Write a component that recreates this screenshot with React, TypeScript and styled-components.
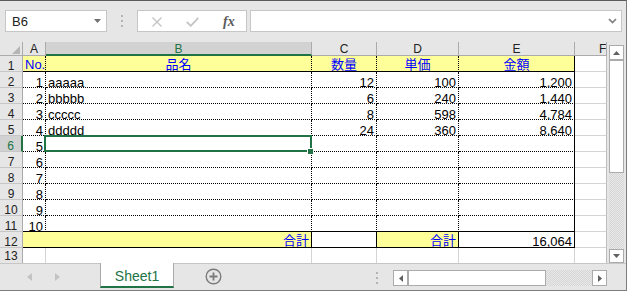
import styled, { createGlobalStyle } from "styled-components";

const GlobalStyle = createGlobalStyle`
  html, body {
    margin: 0;
    padding: 0;
    background: #fff;
  }
  body {
    font-family: "Liberation Sans", "Noto Sans CJK JP", sans-serif;
  }
  * {
    box-sizing: border-box;
  }
`;

const GREEN = "#217346";

const Window = styled.div`
    width: 627px;
    height: 291px;
    background: #e6e6e6;
    border-top: 1px solid #5b5b5b;
    border-right: 1px solid #7d7d7d;
    border-bottom: 1px solid #7d7d7d;
    display: flex;
    flex-direction: column;
    overflow: hidden;
`;

const FormulaBar = styled.div`
    height: 41px;
    display: flex;
    align-items: flex-start;
    padding: 9px 0 0 5px;
`;

const NameBox = styled.div`
    width: 102px;
    height: 22px;
    border: 1px solid #c6c6c6;
    background: #fff;
    display: flex;
    align-items: center;
    justify-content: space-between;
    padding: 0 5px 0 6px;
    font-size: 13px;
    color: #222;
`;

const Grip = styled.div<{ $h: number }>`
    width: 2px;
    height: ${(p) => p.$h}px;
    background-image: repeating-linear-gradient(
        to bottom,
        #b3b3b3 0 2px,
        transparent 2px 5px
    );
`;

const FxBox = styled.div`
    width: 110px;
    height: 22px;
    margin-left: 14px;
    border: 1px solid #c6c6c6;
    background: #fff;
    display: flex;
    align-items: center;
    padding: 1px 0 0 14px;
`;

const FxText = styled.span`
    margin-left: 24px;
    font-family: "Liberation Serif", serif;
    font-style: italic;
    font-weight: bold;
    font-size: 14px;
    color: #5a5a5a;
`;

const FormulaInput = styled.div`
    width: 372px;
    height: 22px;
    margin-left: 3px;
    border: 1px solid #c6c6c6;
    background: #fff;
    display: flex;
    align-items: center;
    justify-content: flex-end;
    padding-right: 4px;
`;

const Main = styled.div`
    display: flex;
    height: 221px;
`;

const Sheet = styled.div`
    width: 607px;
    height: 221px;
    display: grid;
    grid-template-columns: 23px 23px 266px 65px 82px 116px 32px;
    grid-template-rows: 14px repeat(12, 16px) 15px;
    background: #fff;
`;

const Corner = styled.div`
    background: #e6e6e6;
    border-right: 1px solid #ababab;
    border-bottom: 1px solid #ababab;
    display: flex;
    justify-content: flex-end;
    align-items: flex-end;
    padding: 0 2px 1px 0;
`;

const ColHead = styled.div<{ $active?: boolean; $offset?: number }>`
    background: ${(p) => (p.$active ? "#d2d2d2" : "#e6e6e6")};
    color: ${(p) => (p.$active ? GREEN : "#222")};
    border-right: 1px solid #ababab;
    border-bottom: ${(p) =>
        p.$active ? `2px solid ${GREEN}` : "1px solid #ababab"};
    text-align: ${(p) => (p.$offset ? "left" : "center")};
    padding-left: ${(p) => p.$offset ?? 0}px;
    font-size: 12px;
    line-height: 13px;
    padding-top: 1px;
    overflow: hidden;
`;

const RowHead = styled.div<{ $active?: boolean; $last?: boolean }>`
    background: ${(p) => (p.$active ? "#d2d2d2" : "#e6e6e6")};
    color: ${(p) => (p.$active ? GREEN : "#222")};
    border-right: ${(p) =>
        p.$active ? `2px solid ${GREEN}` : "1px solid #ababab"};
    border-bottom: ${(p) => (p.$last ? "none" : "1px solid #c6c6c6")};
    text-align: center;
    font-size: 12px;
    line-height: ${(p) => (p.$last ? 14 : 15)}px;
    padding-top: ${(p) => (p.$last ? 1 : 3)}px;
    overflow: hidden;
`;

type Line = "grid" | "dot" | "solid" | "edge" | "none";

const line = (l: Line) => {
    switch (l) {
        case "dot":
            return "1px dotted #000";
        case "solid":
            return "1px solid #000";
        case "edge":
            return "1px solid #bcbcbc";
        case "none":
            return "none";
        default:
            return "1px solid #d4d4d4";
    }
};

const Cell = styled.div<{
    $r: Line;
    $b: Line;
    $bg?: string;
    $align?: string;
    $blue?: boolean;
    $span?: number;
    $pad?: number;
}>`
    position: relative;
    grid-column: span ${(p) => p.$span ?? 1};
    border-right: ${(p) => line(p.$r)};
    border-bottom: ${(p) => line(p.$b)};
    background: ${(p) => p.$bg ?? "#fff"};
    color: ${(p) => (p.$blue ? "#0000ff" : "#000")};
    text-align: ${(p) => p.$align ?? "left"};
    font-size: 13px;
    line-height: 15px;
    padding: ${(p) => p.$pad ?? 3}px 2px 0 2px;
    white-space: nowrap;
`;

const Selection = styled.div`
    position: absolute;
    z-index: 2;
    left: -2px;
    top: -1px;
    right: -1px;
    bottom: -1px;
    border: 2px solid ${GREEN};
    pointer-events: none;
`;

const FillHandle = styled.div`
    position: absolute;
    right: -4px;
    bottom: -5px;
    width: 7px;
    height: 7px;
    background: ${GREEN};
    border: 1px solid #fff;
`;

const VScroll = styled.div`
    width: 15px;
    margin-left: 2px;
    padding-top: 3px;
    display: flex;
    flex-direction: column;
`;

const ScrollBtn = styled.div<{ $w: number; $h: number }>`
    width: ${(p) => p.$w}px;
    height: ${(p) => p.$h}px;
    flex: none;
    background: #fff;
    border: 1px solid #ababab;
    display: flex;
    align-items: center;
    justify-content: center;
`;

const Thumb = styled.div<{ $w?: number; $h?: number }>`
    width: ${(p) => (p.$w ? `${p.$w}px` : "auto")};
    height: ${(p) => (p.$h ? `${p.$h}px` : "auto")};
    flex: none;
    background: #fff;
    border: 1px solid #ababab;
`;

const Track = styled.div<{ $w?: number }>`
    flex: ${(p) => (p.$w ? "none" : "1")};
    width: ${(p) => (p.$w ? `${p.$w}px` : "auto")};
    background: repeating-conic-gradient(#d6d6d6 0 25%, #e8e8e8 0 50%) 0 0 /
        2px 2px;
`;

const TabBar = styled.div`
    height: 27px;
    border-top: 1px solid #c6c6c6;
    display: flex;
    align-items: flex-start;
    padding-left: 27px;
`;

const NavArrow = styled.svg<{ $gap?: number }>`
    margin-top: 9px;
    margin-left: ${(p) => p.$gap ?? 0}px;
    flex: none;
`;

const Tab = styled.div`
    margin-left: 40px;
    margin-top: -1px;
    width: 74px;
    height: 25px;
    background: #fff;
    border-left: 1px solid #ababab;
    border-right: 1px solid #ababab;
    border-bottom: 2px solid ${GREEN};
    color: ${GREEN};
    font-size: 14px;
    display: flex;
    align-items: center;
    justify-content: center;
    padding-top: 2px;
`;

const AddSheet = styled.svg`
    margin-left: 31px;
    margin-top: 4px;
    flex: none;
`;

const Spacer = styled.div`
    flex: 1;
`;

const HScroll = styled.div`
    display: flex;
    height: 16px;
    margin-top: 6px;
    margin-right: 19px;
    margin-left: 15px;
`;

type CellDef = {
    text?: string;
    align?: string;
    r: Line;
    b: Line;
    bg?: string;
    blue?: boolean;
    span?: number;
    pad?: number;
};

const YELLOW = "#ffff99";

const items = [
    ["1", "aaaaa", "12", "100", "1,200"],
    ["2", "bbbbb", "6", "240", "1,440"],
    ["3", "ccccc", "8", "598", "4,784"],
    ["4", "ddddd", "24", "360", "8,640"],
    ["5", "", "", "", ""],
    ["6", "", "", "", ""],
    ["7", "", "", "", ""],
    ["8", "", "", "", ""],
    ["9", "", "", "", ""],
    ["10", "", "", "", ""],
];

const fCell: CellDef = { r: "edge", b: "grid" };

function buildRows(): CellDef[][] {
    const rows: CellDef[][] = [];
    const heads = ["No.", "品名", "数量", "単価", "金額"];
    rows.push([
        ...heads.map((t, i) => ({
            text: t,
            align: "center",
            r: (i === 4 ? "solid" : "dot") as Line,
            b: "solid" as Line,
            bg: YELLOW,
            blue: true,
            pad: 1,
        })),
        fCell,
    ]);
    items.forEach((it, n) => {
        const b: Line = n === items.length - 1 ? "solid" : "dot";
        rows.push([
            ...it.map((t, i) => ({
                text: t,
                align: i === 1 ? "left" : "right",
                r: (i === 4 ? "solid" : "dot") as Line,
                b,
            })),
            fCell,
        ]);
    });
    rows.push([
        {
            text: "合計",
            align: "right",
            r: "solid",
            b: "solid",
            bg: YELLOW,
            blue: true,
            span: 2,
            pad: 1,
        },
        { r: "solid", b: "solid" },
        {
            text: "合計",
            align: "right",
            r: "solid",
            b: "solid",
            bg: YELLOW,
            blue: true,
            pad: 1,
        },
        { text: "16,064", align: "right", r: "solid", b: "solid", pad: 2 },
        fCell,
    ]);
    rows.push([
        { r: "grid", b: "none" },
        { r: "grid", b: "none" },
        { r: "grid", b: "none" },
        { r: "grid", b: "none" },
        { r: "grid", b: "none" },
        { r: "edge", b: "none" },
    ]);
    return rows;
}

const rows = buildRows();

const Tri = ({ dir, color }: { dir: "up" | "down" | "left" | "right"; color: string }) => {
    const pts = {
        up: "0,4 7,4 3.5,0",
        down: "0,0 7,0 3.5,4",
        left: "4,0 4,7 0,3.5",
        right: "0,0 0,7 4,3.5",
    }[dir];
    const vertical = dir === "up" || dir === "down";
    return (
        <svg width={vertical ? 7 : 4} height={vertical ? 4 : 7}>
            <polygon points={pts} fill={color} />
        </svg>
    );
};

export default function App() {
    return (
        <>
            <GlobalStyle />
            <Window>
                <FormulaBar>
                    <NameBox>
                        <span>B6</span>
                        <Tri dir="down" color="#707070" />
                    </NameBox>
                    <Grip $h={12} style={{ marginLeft: 14, marginTop: 5 }} />
                    <FxBox>
                        <svg width="10" height="10">
                            <path
                                d="M0.5 0.5 L9.5 9.5 M9.5 0.5 L0.5 9.5"
                                stroke="#c4c4c4"
                                strokeWidth="1.4"
                            />
                        </svg>
                        <svg width="13" height="10" style={{ marginLeft: 24 }}>
                            <polyline
                                points="0.8,5 4.8,8.8 12.3,0.8"
                                fill="none"
                                stroke="#c4c4c4"
                                strokeWidth="1.8"
                            />
                        </svg>
                        <FxText>fx</FxText>
                    </FxBox>
                    <FormulaInput>
                        <svg width="9" height="6">
                            <polyline
                                points="1,1 4.5,4.5 8,1"
                                fill="none"
                                stroke="#7f7f7f"
                                strokeWidth="1.7"
                            />
                        </svg>
                    </FormulaInput>
                </FormulaBar>
                <Main>
                    <Sheet>
                        <Corner>
                            <svg width="8" height="8">
                                <polygon points="8,0 8,8 0,8" fill="#b5b5b5" />
                            </svg>
                        </Corner>
                        {["A", "B", "C", "D", "E"].map((c) => (
                            <ColHead key={c} $active={c === "B"}>
                                {c}
                            </ColHead>
                        ))}
                        <ColHead $offset={24}>F</ColHead>
                        {rows.map((row, ri) => (
                            <Row key={ri} index={ri} cells={row} />
                        ))}
                    </Sheet>
                    <VScroll>
                        <ScrollBtn $w={15} $h={15}>
                            <Tri dir="up" color="#606060" />
                        </ScrollBtn>
                        <Thumb $h={113} />
                        <Track />
                        <ScrollBtn $w={15} $h={14}>
                            <Tri dir="down" color="#606060" />
                        </ScrollBtn>
                    </VScroll>
                </Main>
                <TabBar>
                    <NavArrow width="5" height="8">
                        <polygon points="5,0 5,8 0,4" fill="#c3c3c3" />
                    </NavArrow>
                    <NavArrow width="5" height="8" $gap={23}>
                        <polygon points="0,0 0,8 5,4" fill="#c3c3c3" />
                    </NavArrow>
                    <Tab>Sheet1</Tab>
                    <AddSheet width="17" height="17">
                        <circle
                            cx="8.5"
                            cy="8.5"
                            r="7.3"
                            fill="none"
                            stroke="#7a7a7a"
                            strokeWidth="1.4"
                        />
                        <path
                            d="M8.5 4.5 V12.5 M4.5 8.5 H12.5"
                            stroke="#7a7a7a"
                            strokeWidth="1.8"
                        />
                    </AddSheet>
                    <Spacer />
                    <Grip $h={12} style={{ marginTop: 8 }} />
                    <HScroll>
                        <ScrollBtn $w={15} $h={16}>
                            <Tri dir="left" color="#606060" />
                        </ScrollBtn>
                        <Thumb $w={138} />
                        <Track $w={46} />
                        <ScrollBtn $w={15} $h={16}>
                            <Tri dir="right" color="#606060" />
                        </ScrollBtn>
                    </HScroll>
                </TabBar>
            </Window>
        </>
    );
}

function Row({ index, cells }: { index: number; cells: CellDef[] }) {
    const rowNo = index + 1;
    return (
        <>
            <RowHead $active={rowNo === 6} $last={rowNo === 13}>
                {rowNo}
            </RowHead>
            {cells.map((c, ci) => (
                <Cell
                    key={ci}
                    $r={c.r}
                    $b={c.b}
                    $bg={c.bg}
                    $align={c.align}
                    $blue={c.blue}
                    $span={c.span}
                    $pad={c.pad}
                >
                    {c.text}
                    {rowNo === 6 && ci === 1 && (
                        <Selection>
                            <FillHandle />
                        </Selection>
                    )}
                </Cell>
            ))}
        </>
    );
}
